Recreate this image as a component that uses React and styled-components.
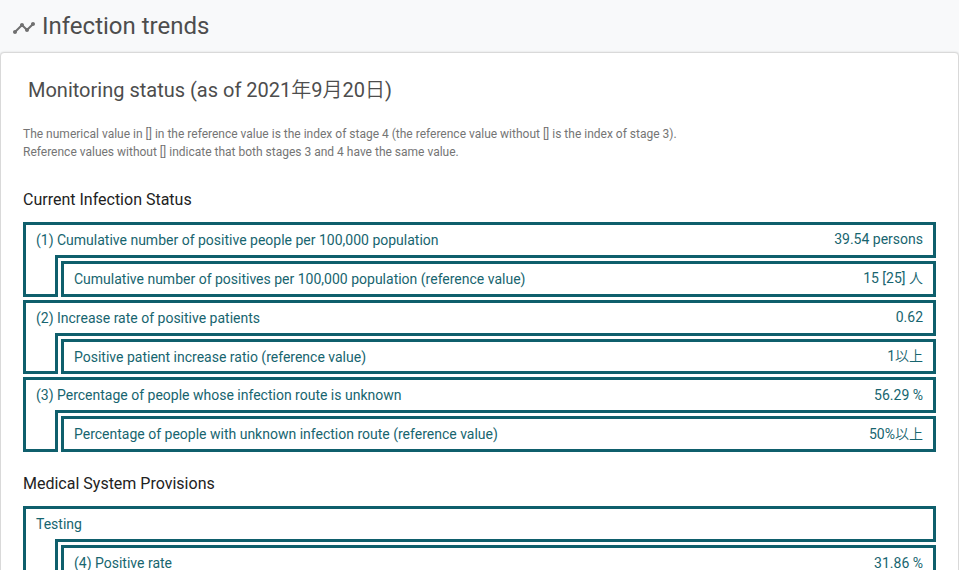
import React from 'react';
import styled, { createGlobalStyle } from 'styled-components';

const Global = createGlobalStyle`
  *, *::before, *::after { box-sizing: border-box; }
  html, body { margin: 0; height: 570px; overflow: hidden; }
  body { background: #f8f9fa; font-family: Roboto, "Noto Sans CJK JP DemiLight", "Noto Sans CJK JP", sans-serif; }
`;
const Page = styled.main`
  height: 570px;
  overflow: hidden;
`;
const Header = styled.header`
  display: flex;
  align-items: center;
  height: 52px;
  padding-left: 12px;
  gap: 6px;
  color: #4d4d4d;
`;
const TrendIcon = styled.svg`
  margin-top: 4px;
`;
const Title = styled.h1`
  margin: 0;
  font-size: 24px;
  line-height: 36px;
  font-weight: 400;
`;
const Card = styled.section`
  height: 700px;
  background: #fff;
  border: 1px solid #d9d9d9;
  border-radius: 4px;
  box-shadow: 0 0 2px rgba(0, 0, 0, 0.15);
  padding: 22px 22px;
`;
const CardTitle = styled.h2`
  margin: 0 0 20px 5px;
  font-size: 20px;
  line-height: 30px;
  font-weight: 400;
  color: #4d4d4d;
`;
const Note = styled.p`
  margin: 0;
  font-size: 12px;
  line-height: 18px;
  color: #757575;
`;
const SectionTitle = styled.h3`
  margin: ${(p) => p.$top}px 0 10.2px;
  font-size: 16px;
  line-height: 24px;
  font-weight: 400;
  color: #222;
`;
const List = styled.div`
  display: flex;
  flex-direction: column;
  gap: 3px;
`;
const Group = styled.div`
  height: 74.6px;
  display: grid;
  grid-template-columns: 35px 1fr;
  grid-template-rows: 35.8px 38.8px;
`;
const Row = styled.div`
  grid-column: 1 / 3;
  display: flex;
  justify-content: space-between;
  padding: 6px 10px 0;
  border: 3px solid #0f5f6c;
  font-size: 14px;
  line-height: 18px;
  color: #17656f;
`;
const Value = styled.span`
  margin-top: ${(p) => (p.$raised ? '-1px' : '0')};
`;
const Stem = styled.div`
  border: solid #0f5f6c;
  border-width: 0 3px 3px;
  margin-top: -3px;
  background: #fff;
`;
const SubRow = styled(Row)`
  grid-column: 2;
  margin: 3px 0 0 3px;
`;

function Item({ label, value, sub, subValue, raised }) {
  return (
    <Group>
      <Row><span>{label}</span><Value $raised={raised}>{value}</Value></Row>
      <Stem />
      <SubRow><span>{sub}</span><Value $raised={raised}>{subValue}</Value></SubRow>
    </Group>
  );
}

const infection = [
  { label: '(1) Cumulative number of positive people per 100,000 population', value: '39.54 persons', sub: 'Cumulative number of positives per 100,000 population (reference value)', subValue: '15 [25] 人', raised: true },
  { label: '(2) Increase rate of positive patients', value: '0.62', sub: 'Positive patient increase ratio (reference value)', subValue: '1以上', raised: true },
  { label: '(3) Percentage of people whose infection route is unknown', value: '56.29 %', sub: 'Percentage of people with unknown infection route (reference value)', subValue: '50%以上' },
];

export default function App() {
  return (
    <Page>
      <Global />
      <Header>
        <TrendIcon width="24" height="24" viewBox="0 0 24 24" fill="#707070" aria-hidden="true">
          <path d="M23 8c0 1.1-.9 2-2 2-.18 0-.35-.02-.51-.07l-3.56 3.55c.05.16.07.34.07.52 0 1.1-.9 2-2 2s-2-.9-2-2c0-.18.02-.36.07-.52l-2.55-2.55c-.16.05-.34.07-.52.07s-.36-.02-.52-.07l-4.55 4.56c.05.16.07.33.07.51 0 1.1-.9 2-2 2s-2-.9-2-2 .9-2 2-2c.18 0 .35.02.51.07l4.56-4.55C8.02 9.36 8 9.18 8 9c0-1.1.9-2 2-2s2 .9 2 2c0 .18-.02.36-.07.52l2.55 2.55c.16-.05.34-.07.52-.07s.36.02.52.07l3.55-3.56C19.02 8.35 19 8.18 19 8c0-1.1.9-2 2-2s2 .9 2 2z" />
        </TrendIcon>
        <Title>Infection trends</Title>
      </Header>
      <Card>
        <CardTitle>Monitoring status (as of 2021年9月20日)</CardTitle>
        <Note>The numerical value in [] in the reference value is the index of stage 4 (the reference value without [] is the index of stage 3).</Note>
        <Note>Reference values without [] indicate that both stages 3 and 4 have the same value.</Note>
        <SectionTitle $top={27}>Current Infection Status</SectionTitle>
        <List>
          {infection.map((item) => (
            <Item key={item.label} {...item} />
          ))}
        </List>
        <SectionTitle $top={20}>Medical System Provisions</SectionTitle>
        <List>
          <Item label="Testing" sub="(4) Positive rate" subValue="31.86 %" />
        </List>
      </Card>
    </Page>
  );
}
